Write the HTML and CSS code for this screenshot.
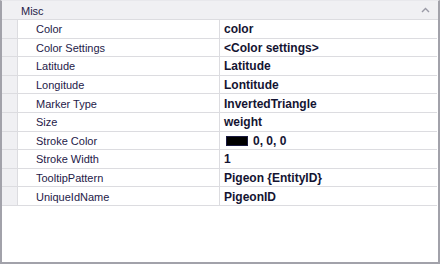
FILE: index.html
```html
<!DOCTYPE html>
<html>
<head>
    <title>Property Grid</title>
    <link rel="stylesheet" href="styles.css">
</head>
<body>
    <div class="grid">
        <div class="category">
            <span class="category-name">Misc</span>
            <svg class="chevron" width="9" height="6" viewBox="0 0 9 6"><path d="M1 5 L4.5 1.5 L8 5" fill="none" stroke="#9a9aa6" stroke-width="1.4"/></svg>
        </div>
        <div class="rows">
            <div class="row"><div class="indent"></div><div class="name">Color</div><div class="value">color</div></div>
            <div class="row"><div class="indent"></div><div class="name">Color Settings</div><div class="value">&lt;Color settings&gt;</div></div>
            <div class="row"><div class="indent"></div><div class="name">Latitude</div><div class="value">Latitude</div></div>
            <div class="row"><div class="indent"></div><div class="name">Longitude</div><div class="value">Lontitude</div></div>
            <div class="row"><div class="indent"></div><div class="name">Marker Type</div><div class="value">InvertedTriangle</div></div>
            <div class="row"><div class="indent"></div><div class="name">Size</div><div class="value">weight</div></div>
            <div class="row"><div class="indent"></div><div class="name">Stroke Color</div><div class="value"><span class="swatch"></span>0, 0, 0</div></div>
            <div class="row"><div class="indent"></div><div class="name">Stroke Width</div><div class="value">1</div></div>
            <div class="row"><div class="indent"></div><div class="name">TooltipPattern</div><div class="value">Pigeon {EntityID}</div></div>
            <div class="row"><div class="indent"></div><div class="name">UniqueIdName</div><div class="value">PigeonID</div></div>
        </div>
    </div>
</body>
</html>
```
FILE: styles.css
```css
body {
    margin: 0;
    padding: 0;
    font-family: "Liberation Sans", Arial, sans-serif;
    font-size: 11px;
    color: #1e2048;
}

.grid {
    width: 440px;
    height: 264px;
    box-sizing: border-box;
    border: 2px solid #a2a2aa;
    border-top: 1px solid #e8e8ec;
    background-color: #ffffff;
}

.category {
    height: 18px;
    display: flex;
    align-items: center;
    justify-content: space-between;
    padding: 0 8px 0 19px;
    background-color: #f0f0f3;
    border-bottom: 1px solid #dcdce0;
}

.category-name {
    padding-top: 1px;
}

.rows {
    display: flex;
    flex-direction: column;
}

.row {
    display: flex;
    height: 17.6px;
    border-bottom: 1px solid #dcdce0;
    margin-right: 1px;
}

.indent {
    width: 15px;
    background-color: #f0f0f3;
    border-right: 1px solid #dcdce0;
}

.name {
    width: 183px;
    padding: 1px 0 0 18px;
    border-right: 1px solid #dcdce0;
    display: flex;
    align-items: center;
}

.value {
    flex: 1;
    padding: 1px 0 0 4px;
    display: flex;
    align-items: center;
    font-weight: bold;
    font-size: 12px;
    color: #141432;
}

.swatch {
    display: inline-block;
    width: 20px;
    height: 8px;
    margin: 0 5px 0 2px;
    background-color: #000000;
    border: 1px solid #1a1a40;
}
```
